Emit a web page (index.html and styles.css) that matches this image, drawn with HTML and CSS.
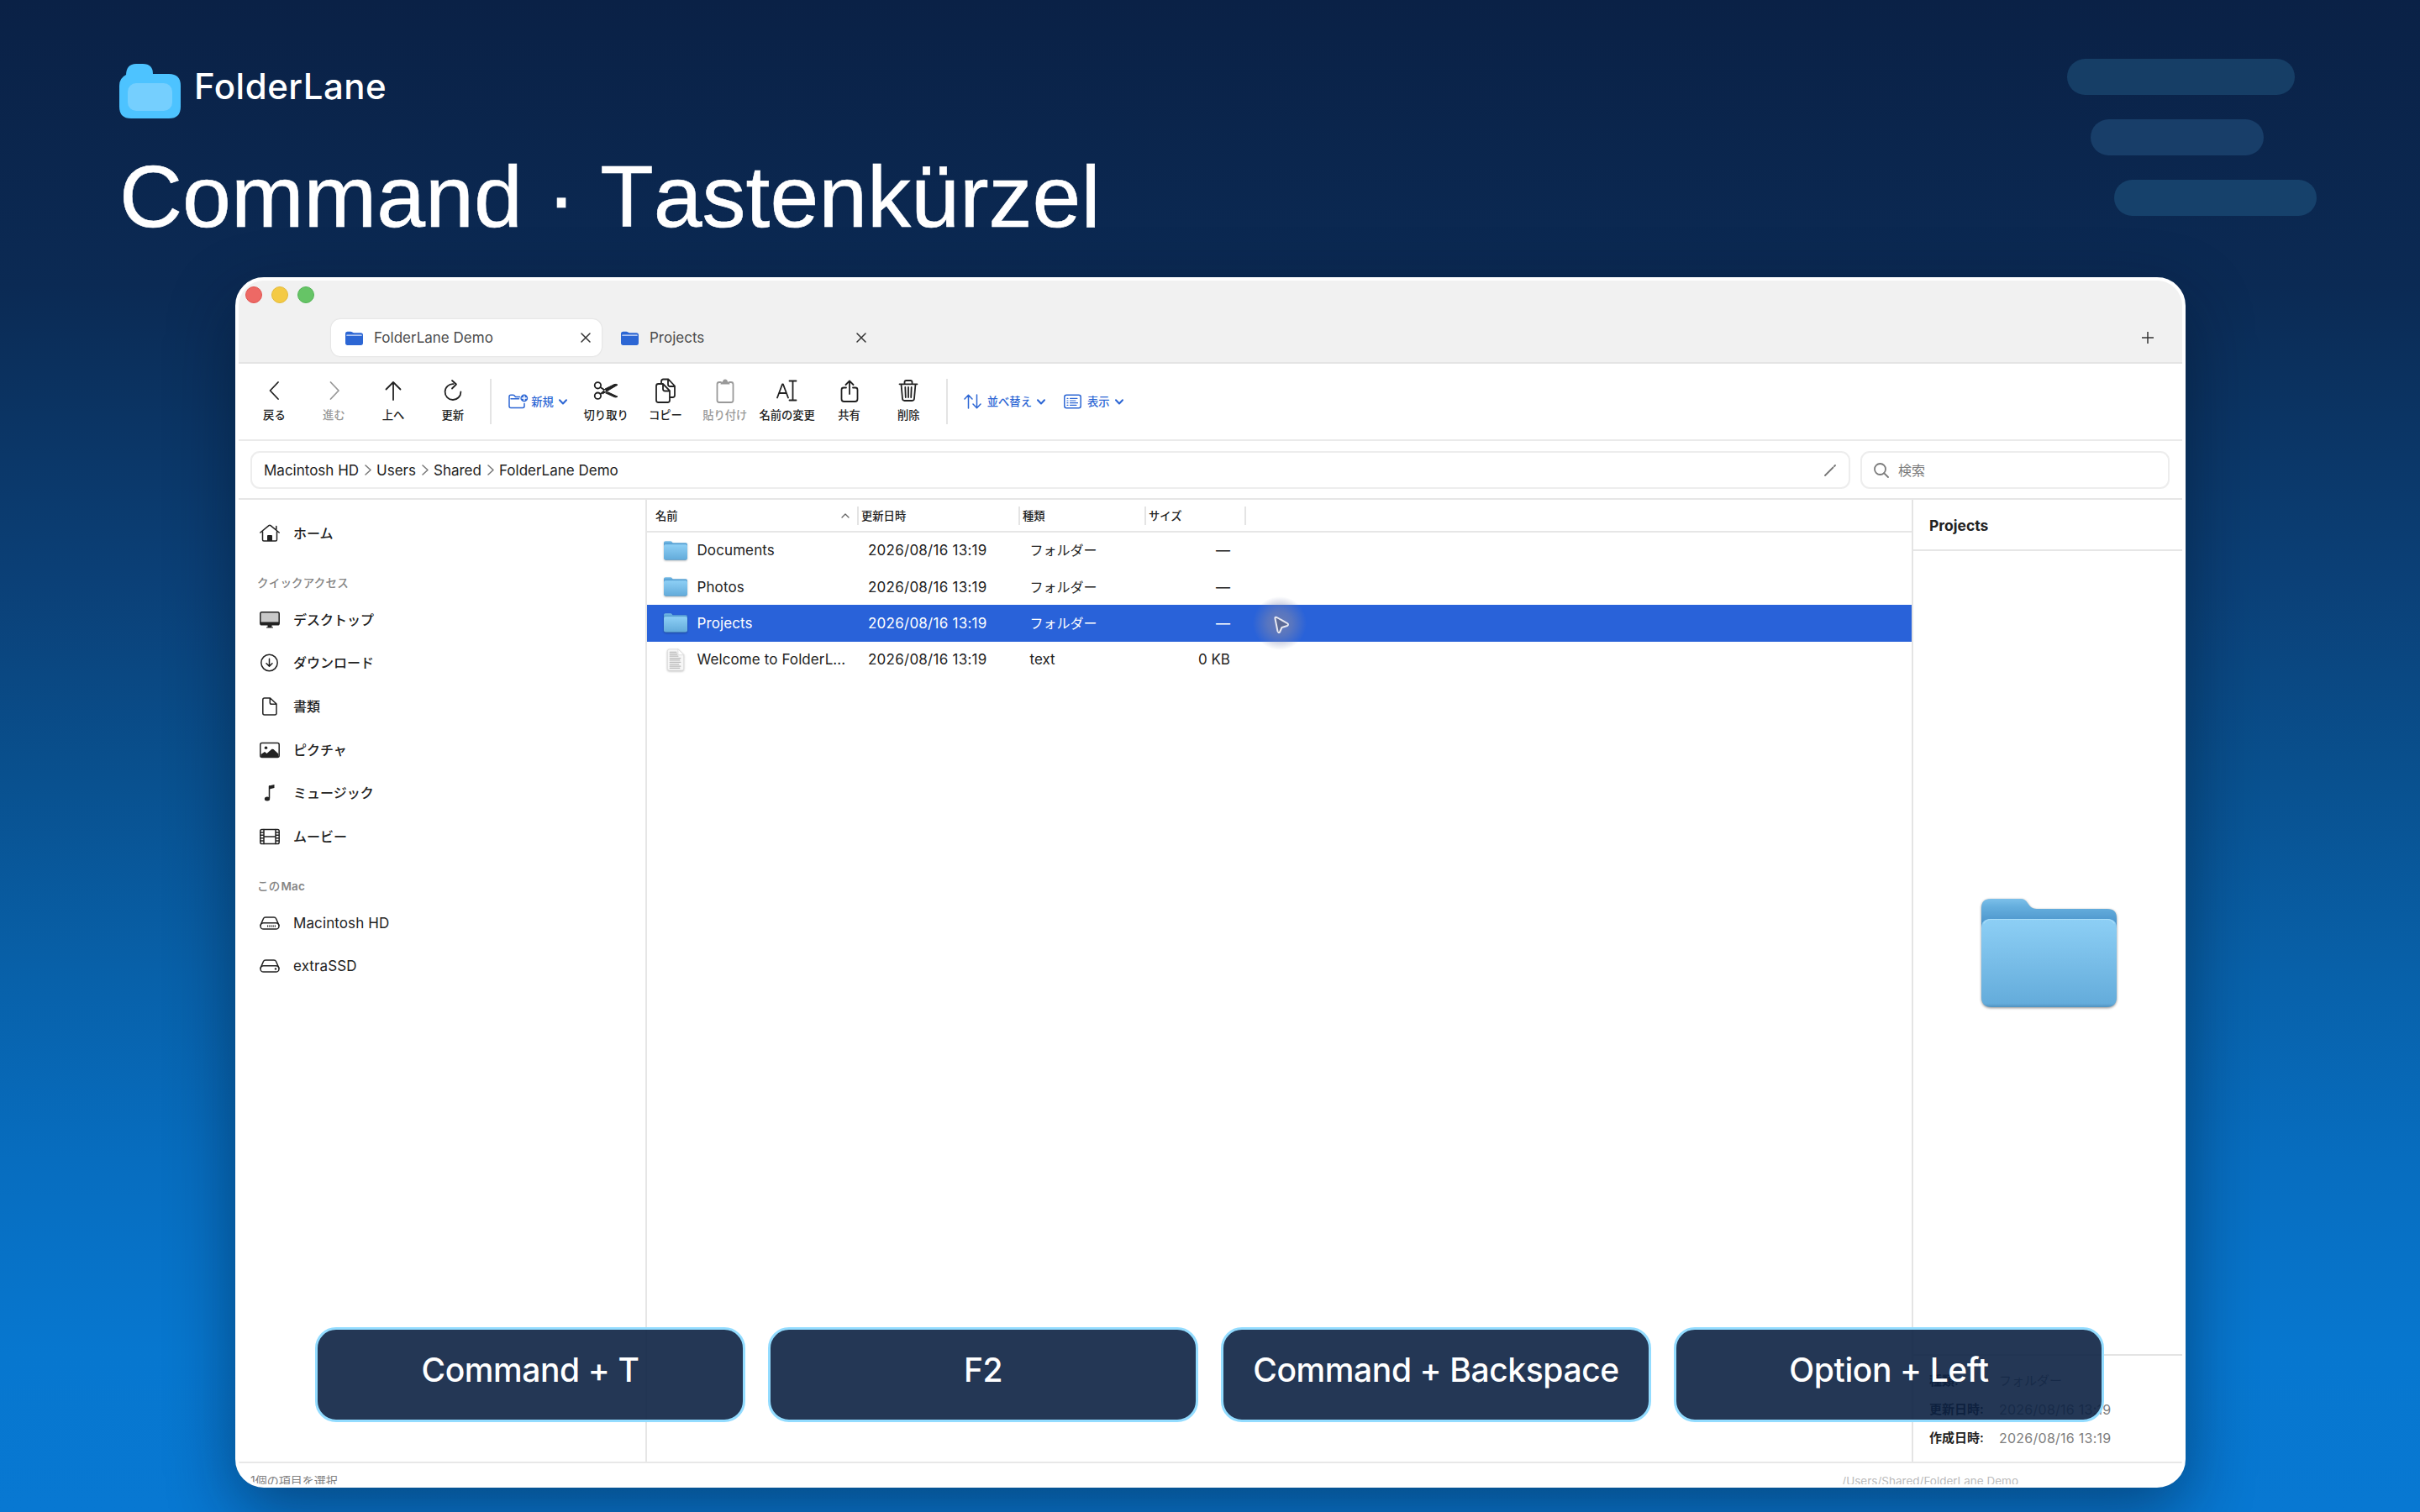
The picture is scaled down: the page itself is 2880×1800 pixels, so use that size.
FILE: index.html
```html
<!DOCTYPE html>
<html lang="de">
    <head>
        <meta charset="utf-8">
        <title>FolderLane</title>
        <link rel="stylesheet" href="styles.css">
    </head>
    <body>
        <svg class="defs" width="0" height="0">
            <defs>
                <linearGradient id="folder-back" x1="0" y1="0" x2="0" y2="1">
                    <stop offset="0" stop-color="#7cc0ea" />
                    <stop offset=".15" stop-color="#66afde" />
                    <stop offset=".5" stop-color="#4b94cb" />
                </linearGradient>
                <linearGradient id="folder-front" x1="0" y1="0" x2="0" y2="1">
                    <stop offset="0" stop-color="#8dcff5" />
                    <stop offset=".96" stop-color="#64acdb" />
                    <stop offset="1" stop-color="#4f92c0" />
                </linearGradient>
                <symbol id="i-folder" viewBox="0 0 161 130">
                    <path fill="url(#folder-back)" d="M0 11Q0 0 11 0H47Q52 0 55 5L58 9Q61 12 66 12H150Q161 12 161 23V60H0Z" />
                    <path fill="url(#folder-front)" d="M0 35Q0 24 11 24H150Q161 24 161 35V117Q161 129 149 129H12Q0 129 0 117Z" />
                    <path fill="none" stroke="#a9ddf9" stroke-width="1.2" d="M3 29Q6 24.5 11 24.5H150Q155 24.5 158 29" />
                </symbol>
                <symbol id="i-tabfolder" viewBox="0 0 20 16">
                    <path fill="#2c66d4" d="M0 3Q0 .5 2.5 .5H6Q7 .5 8 1.3T10 2H17.5Q20 2 20 4.5V13.5Q20 16 17.5 16H2.5Q0 16 0 13.5Z" />
                    <path stroke="#dbe6fb" stroke-width="1.2" d="M1.8 4.8H18.2" />
                </symbol>
                <symbol id="i-close" viewBox="0 0 12 12">
                    <path d="M1 1L11 11M11 1L1 11" />
                </symbol>
                <symbol id="i-down" viewBox="0 0 10 7">
                    <path d="M1 1.2L5 5.5L9 1.2" />
                </symbol>
                <symbol id="i-next" viewBox="0 0 8 13">
                    <path d="M1 1L7 6.5L1 12" />
                </symbol>
                <symbol id="i-drive" viewBox="0 0 24 16">
                    <path d="M1 10.5L4.5 2.5Q5.2 1 7 1H17Q18.8 1 19.5 2.5L23 10.5" />
                    <rect x="1" y="7.8" width="22" height="7.2" rx="3.6" />
                </symbol>
            </defs>
        </svg>

        <header class="header">
            <div>
                <div class="brand">
                    <svg class="brand__logo" viewBox="0 0 73 65">
                        <path fill="#4dc3ff" d="M8 14Q8 0 20 0H28Q40 0 40 12H59Q73 12 73 26V51Q73 65 59 65H14Q0 65 0 51V26Q0 17 8 13Z" />
                        <rect fill="#75cffe" x="10" y="23" width="53" height="33" rx="10" />
                    </svg>
                    <span class="brand__name">FolderLane</span>
                </div>
                <h1 class="title">Command · Tastenkürzel</h1>
            </div>
            <div class="lanes">
                <div class="lanes__bar"></div>
                <div class="lanes__bar lanes__bar--second"></div>
                <div class="lanes__bar lanes__bar--third"></div>
            </div>
        </header>

        <main class="window">
            <div class="titlebar">
                <div class="lights">
                    <span class="light light--red"></span>
                    <span class="light light--yellow"></span>
                    <span class="light light--green"></span>
                </div>
                <div class="tabs">
                    <div class="tab tab--active">
                        <svg class="tab__icon"><use href="#i-tabfolder" /></svg>
                        <span class="latin">FolderLane Demo</span>
                        <svg class="tab__close"><use href="#i-close" /></svg>
                    </div>
                    <div class="tab">
                        <svg class="tab__icon"><use href="#i-tabfolder" /></svg>
                        <span class="latin">Projects</span>
                        <svg class="tab__close"><use href="#i-close" /></svg>
                    </div>
                    <svg class="tabs__add" viewBox="0 0 14 14"><path d="M7 0V14M0 7H14" /></svg>
                </div>
            </div>

            <div class="toolbar">
                <div class="tool">
                    <svg width="30" height="30"><path d="M20 5L10.5 15L20 25" /></svg>
                    <span>戻る</span>
                </div>
                <div class="tool tool--off">
                    <svg width="30" height="30"><path d="M11.500 5L21 15L11.500 25" /></svg>
                    <span>進む</span>
                </div>
                <div class="tool">
                    <svg width="30" height="30"><path d="M15 26V5M6.5 13.5L15 5L23.5 13.5" /></svg>
                    <span>上へ</span>
                </div>
                <div class="tool">
                    <svg width="30" height="30"><path d="M15.5 7.2A9.4 9.4 0 1 0 24.4 16.5M14 3L19 7.5L14 12.5" /></svg>
                    <span>更新</span>
                </div>
                <div class="toolbar__line"></div>
                <div class="menu">
                    <svg width="25" height="18" viewBox="-1 0 25 18">
                        <path d="M13.5 3.5H8.5L7 1.8Q6.5 1.3 5.5 1.3H3Q1 1.3 1 3.3V14.5Q1 16.5 3 16.5H17Q19 16.500 19 14.500V11.500M3 5.800H12.500" />
                        <circle cx="18.8" cy="5" r="4.4" fill="#2c66d4" stroke="none" />
                        <path stroke="#fff" d="M18.8 2.500V7.500M16.300 5H21.300" />
                    </svg>
                    <span class="menu__text menu__text--new">新規</span>
                    <svg class="menu__arrow"><use href="#i-down" /></svg>
                </div>
                <div class="tool tool--cut">
                    <svg width="30" height="30">
                        <circle cx="5.4" cy="8.8" r="3.7" />
                        <circle cx="5.4" cy="21.2" r="3.7" />
                        <path d="M8.5 11L13 14M8.5 19L12 16.5" />
                        <path fill="#222" stroke-width="1" d="M10.5 17.5L14 13L25 7.6Q27.5 6.8 29 8.2L15 16.5L11.5 18.8ZM17.5 16.8L29 22.2Q27 23.5 25 22.6L15 18Z" />
                        <circle cx="14" cy="15.2" r=".9" fill="#fff" stroke="none" />
                    </svg>
                    <span>切り取り</span>
                </div>
                <div class="tool">
                    <svg width="30" height="30">
                        <path d="M10 7V4Q10 1.5 12.5 1.5H18.5L26 9.5V20.5Q26 23 23.5 23H20.5M18 2V7.5Q18 10 20.5 10H25.5" />
                        <path fill="#fff" d="M4 9.5Q4 7 6.5 7H12L20 15.2V26.5Q20 29 17.5 29H6.5Q4 29 4 26.5ZM12 7.5V13Q12 15.5 14.5 15.5H19.5" />
                    </svg>
                    <span>コピー</span>
                </div>
                <div class="tool tool--off">
                    <svg width="30" height="30">
                        <path d="M10 5H8Q5.5 5 5.5 7.5V26.5Q5.5 29 8 29H22Q24.5 29 24.5 26.5V7.5Q24.5 5 22 5H20" />
                        <path fill="#999" stroke="none" d="M9.5 7.5Q9.5 4.5 12 4.5Q12.5 1.5 15 1.5T18 4.5Q20.5 4.5 20.5 7.5Z" />
                    </svg>
                    <span>貼り付け</span>
                </div>
                <div class="tool tool--rename">
                    <svg width="30" height="30">
                        <path d="M3 23.5L9 7.5H10L16 23.5M5.2 18H13.8M17.5 3.5H25.5M17.5 26.5H25.5M21.5 3.5V26.5" />
                    </svg>
                    <span>名前の変更</span>
                </div>
                <div class="tool">
                    <svg width="30" height="30">
                        <path d="M11 11.5H8Q5.5 11.5 5.5 14V25Q5.5 28 8.5 28H21.5Q24.5 28 24.5 25V14Q24.5 11.5 22 11.5H19M15 19V3.5M10.5 8L15 3.5L19.5 8" />
                    </svg>
                    <span>共有</span>
                </div>
                <div class="tool">
                    <svg width="30" height="30">
                        <path d="M4.5 7.3H25.5M10.5 7V5Q10.5 3 12.5 3H17.5Q19.5 3 19.5 5V7M6.5 7.5L8 24.5Q8.2 27 10.5 27H19.5Q21.8 27 22 24.5L23.5 7.5M11.3 11L11.8 23M15 11V23M18.7 11L18.2 23" />
                    </svg>
                    <span>削除</span>
                </div>
                <div class="toolbar__line"></div>
                <div class="menu menu--sort">
                    <svg width="21" height="18"><path d="M5.5 17V1.5M1 6L5.5 1.3L10 6M15.5 1V16.5M11 12L15.5 16.7L20 12" /></svg>
                    <span class="menu__text">並べ替え</span>
                    <svg class="menu__arrow"><use href="#i-down" /></svg>
                </div>
                <div class="menu">
                    <svg width="21" height="18">
                        <rect x=".8" y="1.3" width="19.4" height="15.4" rx="2.5" />
                        <path stroke-width="1.200" d="M4 5.3H5M7.5 5.3H16M4 8H5M7.5 8H14M4 10.7H5M7.5 10.7H16.5M4 13.3H5M7.5 13.3H15" />
                    </svg>
                    <span class="menu__text">表示</span>
                    <svg class="menu__arrow"><use href="#i-down" /></svg>
                </div>
            </div>

            <div class="pathrow">
                <div class="field field--path latin">
                    <span class="crumb">Macintosh HD</span>
                    <svg class="crumb__next"><use href="#i-next" /></svg>
                    <span class="crumb">Users</span>
                    <svg class="crumb__next"><use href="#i-next" /></svg>
                    <span class="crumb">Shared</span>
                    <svg class="crumb__next"><use href="#i-next" /></svg>
                    <span class="crumb">FolderLane Demo</span>
                    <svg class="pencil" viewBox="0 0 14 14"><path d="M1 13L10.5 3.5" /><path d="M12 2L13 1" /></svg>
                </div>
                <div class="field field--search">
                    <svg width="18" height="18"><circle cx="7.5" cy="7.5" r="6.5" /><path d="M12.3 12.3L17 17" /></svg>
                    <span>検索</span>
                </div>
            </div>

            <div class="content">
                <nav class="sidebar">
                    <div class="place">
                        <svg viewBox="0 0 24 22"><path d="M.8 10L11 1.6Q12 .9 13 1.6L23.2 10M3.5 8.5V18.5Q3.5 20 5 20H19Q20.5 20 20.5 18.5V8.5M19.8 6.5V2.5" /><path class="solid" d="M9 20V14Q9 13 10 13H14Q15 13 15 14V20Z" /></svg>
                        <span>ホーム</span>
                    </div>
                    <h2 class="sidebar__label">クイックアクセス</h2>
                    <div class="place">
                        <svg viewBox="0 0 24 22"><rect x=".8" y="1.8" width="22.4" height="15" rx="1.8" fill="#c9c9c9" /><path class="solid" d="M1 13.5H23V15.5Q23 17 21.5 17H2.5Q1 17 1 15.5ZM9.5 17H14.5V19.5H16V20.5H8V19.5H9.5Z" /></svg>
                        <span>デスクトップ</span>
                    </div>
                    <div class="place">
                        <svg viewBox="0 0 24 22"><circle cx="11.5" cy="11" r="9.7" /><path d="M11.5 6.2V15M8 11.8L11.5 15.3L15 11.8" /></svg>
                        <span>ダウンロード</span>
                    </div>
                    <div class="place">
                        <svg viewBox="0 0 24 22"><path d="M3.8 3Q3.8 1 5.8 1H12.5L20 8V19Q20 21 18 21H5.8Q3.8 21 3.8 19ZM12.3 1.2V6.5Q12.3 8.3 14.2 8.3H19.8" /></svg>
                        <span>書類</span>
                    </div>
                    <div class="place">
                        <svg viewBox="0 0 24 22"><rect x=".8" y="2.5" width="22.4" height="17" rx="2" /><circle class="solid" cx="7.5" cy="8.3" r="1.8" /><path class="solid" d="M1.5 16L6 13L8.5 15L14.5 9.8Q15.5 9.5 16.5 10L22.5 15.5V19H1.5Z" /></svg>
                        <span>ピクチャ</span>
                    </div>
                    <div class="place">
                        <svg viewBox="0 0 24 22"><path d="M11.5 17V3" /><path class="solid" d="M11 2.5L17.5 1V5L11.5 6.5Z" /><ellipse class="solid" cx="9" cy="18" rx="3.200" ry="2.500" /></svg>
                        <span>ミュージック</span>
                    </div>
                    <div class="place">
                        <svg viewBox="0 0 24 22"><rect x=".8" y="2.5" width="22.4" height="17" rx="1.8" /><path d="M5 2.5V19.5M19 2.5V19.5M5 11H19M1 6H5M1 9.3H5M1 12.7H5M1 16H5M19 6H23M19 9.3H23M19 12.7H23M19 16H23" /></svg>
                        <span>ムービー</span>
                    </div>
                    <h2 class="sidebar__label">この<span class="sidebar__mac">Mac</span></h2>
                    <div class="place">
                        <svg viewBox="0 -3 24 22"><use href="#i-drive" width="24" height="16" /><path stroke-dasharray="1.2 1" stroke-linecap="butt" stroke-width="2" d="M9 11.4H20" /></svg>
                        <span class="latin">Macintosh HD</span>
                    </div>
                    <div class="place">
                        <svg viewBox="0 -3 24 22"><use href="#i-drive" width="24" height="16" /><circle class="solid" cx="19" cy="11.4" r="1.200" /></svg>
                        <span class="latin">extraSSD</span>
                    </div>
                </nav>

                <section class="list">
                    <div class="row row--head">
                        <div class="head">名前<svg class="head__sort" viewBox="0 0 10 6"><path d="M1 5L5 1L9 5" /></svg></div>
                        <div class="head">更新日時</div>
                        <div class="head">種類</div>
                        <div class="head">サイズ</div>
                    </div>
                    <div class="row">
                        <div class="name"><svg><use href="#i-folder" /></svg><span>Documents</span></div>
                        <div class="date">2026/08/16 13:19</div>
                        <div class="kind">フォルダー</div>
                        <div class="size">—</div>
                    </div>
                    <div class="row">
                        <div class="name"><svg><use href="#i-folder" /></svg><span>Photos</span></div>
                        <div class="date">2026/08/16 13:19</div>
                        <div class="kind">フォルダー</div>
                        <div class="size">—</div>
                    </div>
                    <div class="row row--selected">
                        <div class="name"><svg><use href="#i-folder" /></svg><span>Projects</span></div>
                        <div class="date">2026/08/16 13:19</div>
                        <div class="kind">フォルダー</div>
                        <div class="size">—</div>
                        <div class="cursor">
                            <svg viewBox="0 0 20 22"><path d="M2.5 3.5Q2 1 4.5 2L17 9Q19 10.5 17 12L10.5 14L8 19.5Q6.5 21 5.5 18.5Z" /></svg>
                        </div>
                    </div>
                    <div class="row">
                        <div class="name name--file">
                            <svg viewBox="0 0 28 28"><path fill="#f6f6f6" stroke="#dedede" d="M4 3Q4 1 6 1H17L24 8V25Q24 27 22 27H6Q4 27 4 25Z" /><path stroke="#b9b9b9" stroke-width="1.3" d="M7 4.5H15M7 7H16M7 9.5H17M7 12H20M7 14.5H19M7 17H20M7 19.5H18M7 22H20M7 24.2H19" /><path fill="#fff" stroke="#dedede" d="M17 1V8H24Z" /></svg>
                            <span>Welcome to FolderL...</span>
                        </div>
                        <div class="date">2026/08/16 13:19</div>
                        <div class="kind latin">text</div>
                        <div class="size">0 KB</div>
                    </div>
                </section>

                <aside class="preview">
                    <h2 class="preview__title">Projects</h2>
                    <div class="preview__art">
                        <svg width="161" height="130"><use href="#i-folder" /></svg>
                    </div>
                    <dl class="details">
                        <dt>種類:</dt><dd>フォルダー</dd>
                        <dt>更新日時:</dt><dd class="latin">2026/08/16 13:19</dd>
                        <dt>作成日時:</dt><dd class="latin">2026/08/16 13:19</dd>
                    </dl>
                </aside>
            </div>

            <footer class="status">
                <span class="status__count">1個の項目を選択</span>
                <span class="status__path">/Users/Shared/FolderLane Demo</span>
            </footer>
        </main>

        <div class="keys">
            <div class="key"><span>Command + T</span></div>
            <div class="key"><span>F2</span></div>
            <div class="key"><span>Command + Backspace</span></div>
            <div class="key"><span>Option + Left</span></div>
        </div>
    </body>
</html>
```

FILE: styles.css
```css
* {
    margin: 0;
    padding: 0;
    box-sizing: border-box;
}

body {
    position: relative;
    width: 2880px;
    height: 1800px;
    overflow: hidden;
    font-family: Inter, "Noto Sans CJK JP", sans-serif;
    font-size: 16px;
    line-height: 20px;
    color: #222;
    background: linear-gradient(#0a2146 0, #0b2a54 340px, #0b3260 460px, #0b4077 690px, #09508e 920px, #0860a8 1150px, #076dbf 1380px, #0777cf 1610px, #0878d2 1800px);
}

svg {
    display: block;
    flex: none;
    fill: none;
    stroke: currentColor;
    stroke-width: 1.8;
    stroke-linecap: round;
    stroke-linejoin: round;
}

symbol path[fill] {
    stroke-width: 0;
}

symbol path[fill="none"] {
    stroke-width: 1.2;
}

.defs {
    position: absolute;
}

.solid {
    fill: currentColor;
    stroke: none;
}

.latin {
    font-size: 17px;
}

/* header */

.header {
    display: flex;
    justify-content: space-between;
    height: 330px;
    padding-left: 142px;
    color: #fff;
}

.brand {
    display: flex;
    align-items: center;
    gap: 16px;
    height: 65px;
    margin-top: 76px;
}

.brand__logo {
    width: 73px;
    height: 65px;
    stroke: none;
}

.brand__name {
    padding-bottom: 11px;
    font-size: 42px;
    line-height: 42px;
    font-weight: 500;
    letter-spacing: .5px;
}

.title {
    margin-top: 41px;
    font-family: "Liberation Sans", Arial, sans-serif;
    font-size: 104px;
    line-height: 104px;
    font-weight: 400;
    font-kerning: none;
    -webkit-text-stroke: .6px #fff;
}

.lanes {
    display: flex;
    flex-direction: column;
    gap: 29px;
    width: 420px;
    padding-top: 70px;
}

.lanes__bar {
    width: 271px;
    height: 43px;
    border-radius: 22px;
    background: #163e66;
}

.lanes__bar--second {
    width: 206px;
    margin-left: 28px;
    background: #183e69;
}

.lanes__bar--third {
    width: 241px;
    margin-left: 56px;
    background: #16416b;
}

/* app window */

.window {
    display: flex;
    flex-direction: column;
    width: 2321px;
    height: 1441px;
    margin-left: 280px;
    border: 4px solid #fff;
    border-radius: 34px;
    overflow: hidden;
    background: #fff;
    box-shadow: 0 28px 80px rgba(4, 16, 34, .45);
}

.titlebar {
    flex: none;
    height: 99px;
    background: #f1f1f1;
    border-bottom: 2px solid #e4e4e4;
}

.lights {
    display: flex;
    gap: 11.2px;
    height: 46px;
    padding: 7px 0 0 7.5px;
}

.light {
    width: 20px;
    height: 20px;
    border-radius: 50%;
    border: 1px solid #e0524f;
    background: #ed6965;
}

.light--yellow {
    border-color: #e2b93c;
    background: #f4ca45;
}

.light--green {
    border-color: #53b455;
    background: #66c466;
}

.tabs {
    display: flex;
    align-items: center;
    gap: 6px;
    padding: 0 34px 0 110px;
}

.tab {
    display: flex;
    align-items: center;
    width: 322px;
    height: 44px;
    padding: 0 13px 0 17px;
    color: #4c4c4c;
}

.tab--active {
    border-radius: 11px;
    background: #fff;
    box-shadow: 0 0 2px rgba(0, 0, 0, .16);
}

.tab__icon {
    width: 21px;
    height: 17px;
    margin-right: 13px;
}

.tab__close {
    width: 12px;
    height: 12px;
    margin-left: auto;
    color: #333;
    stroke-width: 1.5;
}

.tabs__add {
    width: 14px;
    height: 14px;
    margin-left: auto;
    color: #333;
    stroke-width: 1.5;
}

.toolbar {
    display: flex;
    flex: none;
    height: 92px;
    padding: 17px 0 0 7px;
    border-bottom: 2px solid #eaeaea;
    font-size: 13.3px;
    font-weight: 500;
}

.tool {
    display: flex;
    flex-direction: column;
    align-items: center;
    gap: 4px;
    width: 70.8px;
}

.tool--off {
    color: #999;
}

.tool--cut {
    margin-left: 11px;
}

.tool--rename {
    width: 77px;
}

.toolbar__line {
    width: 2px;
    height: 54px;
    margin: 1px 19px 0 9px;
    background: #e4e4e4;
}

.menu {
    display: flex;
    align-items: center;
    height: 56px;
    color: #2c66d4;
}

.menu svg {
    stroke-width: 1.5;
}

.menu--sort {
    margin-right: 22px;
}

.menu__text {
    margin: 0 6px 0 7px;
}

.menu__text--new {
    margin-left: 3px;
}

.menu .menu__arrow {
    width: 10px;
    height: 7px;
    stroke-width: 2;
}

.pathrow {
    display: flex;
    flex: none;
    gap: 12.5px;
    height: 70px;
    padding: 12px 15px 0 14px;
    border-bottom: 2px solid #e6e6e6;
}

.field {
    display: flex;
    align-items: center;
    height: 45px;
    border: 2px solid #ededed;
    border-radius: 11px;
}

.field--path {
    flex: 1;
    padding: 0 15px 0 14px;
}

.crumb__next {
    width: 8px;
    height: 13px;
    margin: 0 6px 0 7px;
    color: #777;
    stroke-width: 1.5;
}

.pencil {
    width: 14px;
    height: 14px;
    margin-left: auto;
    color: #777;
}

.field--search {
    gap: 11px;
    width: 368px;
    padding-left: 14px;
    color: #7b7b7b;
}

.content {
    display: flex;
    flex: none;
    height: 1145px;
}

/* places */

.sidebar {
    width: 486px;
    padding-top: 14px;
    border-right: 2px solid #e6e6e6;
}

.place {
    display: flex;
    align-items: center;
    gap: 16px;
    height: 51.7px;
    padding-left: 25px;
    font-weight: 500;
}

.place .latin {
    font-weight: 400;
    letter-spacing: .1px;
}

.place svg {
    width: 24px;
    height: 22px;
    stroke-width: 1.5;
}

.sidebar__label {
    height: 51px;
    padding: 23px 0 0 22px;
    font-size: 13.5px;
    font-weight: 500;
    letter-spacing: .2px;
    color: #858585;
}

.sidebar__mac {
    margin-left: 1px;
    font-weight: 600;
}

/* file list */

.list {
    flex: 1;
}

.row {
    display: grid;
    grid-template-columns: 252px 192px 150px 119px;
    align-items: center;
    height: 43.4px;
    font-size: 17px;
}

.row--head {
    height: 38.5px;
    padding-top: 2px;
    border-bottom: 2px solid #e6e6e6;
    font-size: 13.3px;
    font-weight: 500;
}

.head {
    display: flex;
    align-items: center;
    height: 22px;
    padding-left: 3px;
    border-right: 2px solid #e4e4e4;
}

.head:first-child {
    padding-left: 10px;
}

.head__sort {
    width: 10px;
    height: 6px;
    margin: 0 9px 0 auto;
    color: #666;
    stroke-width: 1.3;
}

.row--selected {
    position: relative;
    color: #fff;
    background: #2962d9;
}

.name {
    display: flex;
    align-items: center;
    gap: 11.5px;
    padding-left: 20px;
    white-space: nowrap;
    letter-spacing: .1px;
}

.name svg {
    width: 28px;
    height: 23px;
    filter: drop-shadow(0 1px 1px rgba(0, 0, 0, .25));
}

.name--file svg {
    height: 27px;
    stroke-width: 1;
}

.date {
    padding-left: 11px;
    letter-spacing: .25px;
}

.kind {
    padding-left: 11.5px;
    font-size: 16px;
}

.kind.latin {
    font-size: 17px;
}

.size {
    padding-right: 19px;
    text-align: right;
}

.cursor {
    position: absolute;
    left: 721px;
    top: -10px;
    display: flex;
    justify-content: center;
    align-items: center;
    width: 64px;
    height: 64px;
    padding: 4px 0 0 4px;
    border-radius: 50%;
    background: radial-gradient(closest-side, rgba(118, 130, 176, .85), rgba(118, 130, 176, .6) 45%, rgba(118, 130, 176, 0));
}

.cursor svg {
    width: 20px;
    height: 22px;
    fill: #5c6a96;
    color: #e6e8f2;
    stroke-width: 2;
}

/* preview */

.preview {
    display: flex;
    flex-direction: column;
    width: 322px;
    border-left: 2px solid #e4e4e4;
}

.preview__title {
    height: 61px;
    padding: 21px 0 0 19px;
    border-bottom: 2px solid #e6e6e6;
    font-size: 17.5px;
    font-weight: 700;
}

.preview__art {
    display: flex;
    flex: 1;
    justify-content: center;
    align-items: center;
    padding: 1px 0 0 2px;
}

.preview__art svg {
    filter: drop-shadow(0 1px 1.5px rgba(0, 0, 0, .45));
}

.details {
    display: grid;
    grid-template-columns: 83px auto;
    grid-auto-rows: 34px;
    height: 128px;
    padding: 13px 0 0 19px;
    border-top: 2px solid #e4e4e4;
    font-size: 15px;
    line-height: 34px;
}

.details dt {
    font-weight: 600;
}

.details dd {
    color: #7e7e7e;
}

.details .latin {
    font-size: 16px;
    letter-spacing: .25px;
}

.status {
    display: flex;
    flex: none;
    justify-content: space-between;
    height: 27px;
    padding: 11px 195px 0 14px;
    border-top: 2px solid #e8e8e8;
    font-size: 13.5px;
    color: #808080;
    white-space: nowrap;
}

.status__count {
    font-size: 14px;
}

.status__path {
    color: #bbb;
}

/* shortcut keys laid over the window */

.keys {
    position: absolute;
    left: 375px;
    top: 1580px;
    display: flex;
    gap: 27px;
}

.key {
    display: flex;
    justify-content: center;
    align-items: center;
    width: 512px;
    height: 113px;
    padding-bottom: 11px;
    border: 3px solid #93dcff;
    border-radius: 25px;
    background: rgba(12, 33, 67, .9);
    color: #fff;
    font-size: 39px;
    line-height: 48px;
    font-weight: 500;
    letter-spacing: -.4px;
}
```
